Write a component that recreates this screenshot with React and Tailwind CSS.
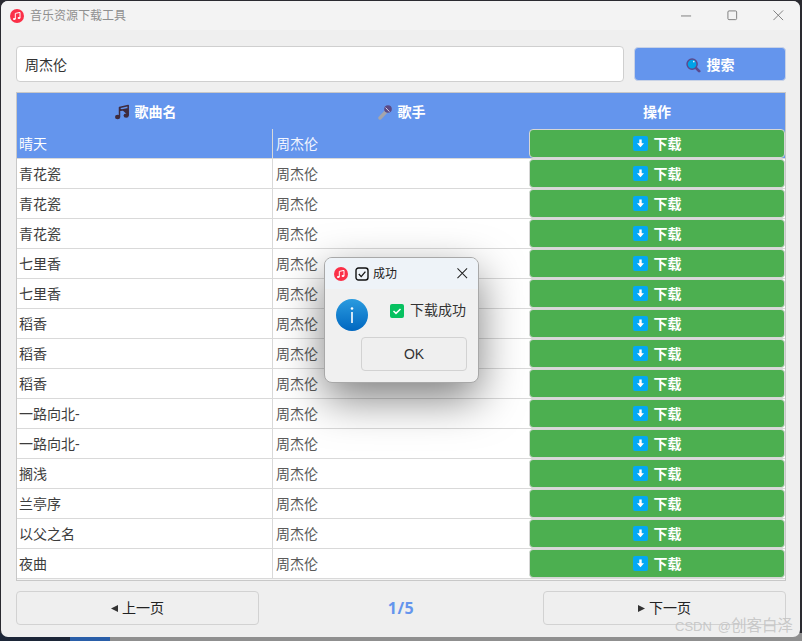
import React from 'react';

const songs = ['晴天', '青花瓷', '青花瓷', '青花瓷', '七里香', '七里香', '稻香', '稻香', '稻香', '一路向北-', '一路向北-', '搁浅', '兰亭序', '以父之名', '夜曲'];

function AppIcon({ className }) {
  return (
    <svg viewBox="0 0 14 14" className={className}>
      <circle cx="7" cy="7" r="7" fill="#fb3048" />
      <path d="M5.3 4.4 L10 3.4 V8.9 M5.3 4.4 V10" fill="none" stroke="#fff" strokeWidth="1" />
      <ellipse cx="4.3" cy="10" rx="1.4" ry="1.1" fill="#fff" />
      <ellipse cx="9" cy="9" rx="1.4" ry="1.1" fill="#fff" />
    </svg>
  );
}

function NoteIcon() {
  return (
    <svg viewBox="0 0 16 16" className="w-[16px] h-[16px]">
      <path d="M5.5 3.4 L14.2 1.4 V11.6 M5.5 3.4 V13.2 M5.5 3.4 V6.6 L14.2 4.8 V1.4 Z" fill="#3f2b3d" stroke="#3f2b3d" strokeWidth="1.5" strokeLinejoin="round" />
      <ellipse cx="3.6" cy="13" rx="2.6" ry="2.2" fill="#3f2b3d" />
      <ellipse cx="12.2" cy="11.6" rx="2.6" ry="2.2" fill="#3f2b3d" />
    </svg>
  );
}

function MicIcon() {
  return (
    <svg viewBox="0 0 16 16" className="w-[16px] h-[16px]">
      <path d="M9.6 7 L3 14" stroke="#a5a5ab" strokeWidth="3.4" strokeLinecap="round" />
      <circle cx="11" cy="5" r="3.8" fill="#5b4a86" />
      <path d="M8.6 3.6 L12.4 7.6" stroke="#d8d4e4" strokeWidth="1" />
    </svg>
  );
}

function SearchIcon() {
  return (
    <svg viewBox="0 0 16 16" className="w-[15px] h-[15px]">
      <path d="M10 10 L14 14" stroke="#5b4a8e" strokeWidth="3" strokeLinecap="round" />
      <circle cx="6.5" cy="6.5" r="5.4" fill="#00a2e8" stroke="#5b4a8e" strokeWidth="1.6" />
      <rect x="7.5" y="3" width="1.6" height="1.6" fill="#dff4ff" />
    </svg>
  );
}

function DownIcon() {
  return (
    <svg viewBox="0 0 15 15" className="w-[15px] h-[15px]">
      <rect width="15" height="15" rx="2" fill="#03a9f4" />
      <path d="M6.3 3.5 H8.7 V7.2 H11 L7.5 11.2 L4 7.2 H6.3 Z" fill="#fff" />
    </svg>
  );
}

function Row({ name, selected }) {
  return (
    <div className={`grid grid-cols-[256px_256px_1fr] h-[30px] border-b border-[#d9d9d9] ${selected ? 'bg-[#6495ed] text-white' : 'bg-white text-[#3c3c3c]'}`}>
      <div className="flex items-center pl-[2px] pt-[1px] border-r border-[#d9d9d9]">{name}</div>
      <div className={`flex items-center pl-[3px] pt-[1px] ${selected ? 'text-[#f3f6ff]' : 'text-[#5a5a5a]'}`}>周杰伦</div>
      <button className="w-full h-[29px] bg-[#4caf50] border border-[#d6d6d6] rounded-[4px] flex items-center justify-center gap-[6px] text-white font-bold text-[14px]">
        <DownIcon />
        <span className="pt-[1px]">下载</span>
      </button>
    </div>
  );
}

function PageButton({ dir, children }) {
  return (
    <button className="w-[243px] h-[34px] border border-[#d2d2d2] rounded-[4px] bg-[#efefef] flex items-center justify-center gap-[4px] text-[14px] text-[#222222]">
      <svg viewBox="0 0 7 7" className="w-[7px] h-[7px]">
        <path d={dir === 'left' ? 'M0 3.5 L7 0 V7 Z' : 'M7 3.5 L0 0 V7 Z'} fill="#333333" />
      </svg>
      {children}
    </button>
  );
}

export default function App() {
  return (
    <div className="relative w-[802px] h-[641px] overflow-hidden bg-[#2a2a30] font-['Liberation_Sans','Noto_Sans_CJK_SC',sans-serif] text-[14px]">
      <div className="absolute left-0 right-0 bottom-0 h-[8px] flex">
        <div className="w-[70px] bg-[#1c2638]" />
        <div className="w-[40px] bg-[#2a5ea8]" />
        <div className="flex-1 bg-[#8f8f8f]" />
      </div>

      <div className="relative flex flex-col w-[799px] h-[636px] ml-[1px] mt-[1px] rounded-[7px] overflow-hidden bg-[#efefef]">
        <div className="flex items-center h-[29px] bg-[#f3f3f3] shrink-0">
          <AppIcon className="w-[14px] h-[14px] ml-[9px]" />
          <span className="ml-[6px] text-[12px] text-[#8f8f8f]">音乐资源下载工具</span>
          <div className="ml-auto flex items-center text-[#777777]">
            <svg viewBox="0 0 12 12" className="w-[11px] h-[11px] mr-[35px]"><path d="M0 6.5 H11" stroke="#777" strokeWidth="1" /></svg>
            <svg viewBox="0 0 12 12" className="w-[11px] h-[11px] mr-[35px]"><rect x="1" y="1" width="9.5" height="9.5" rx="1.2" fill="none" stroke="#777" strokeWidth="1" /></svg>
            <svg viewBox="0 0 12 12" className="w-[11px] h-[11px] mr-[16px]"><path d="M.5 .5 L11 11 M11 .5 L.5 11" stroke="#777" strokeWidth="1" /></svg>
          </div>
        </div>

        <div className="flex flex-col w-[785px] pl-[15px] pt-[16px]">
          <div className="flex items-center gap-[10px] h-[36px]">
            <div className="w-[608px] h-[36px] border border-[#cfcfcf] rounded-[4px] bg-white flex items-center pl-[8px] pt-[2px] text-[14px] text-[#333333]">周杰伦</div>
            <button className="w-[152px] h-[34px] border border-[#c8d2e6] rounded-[4px] bg-[#6495ed] flex items-center justify-center gap-[6px] pt-[2px] text-white font-bold text-[14px]">
              <SearchIcon />
              搜索
            </button>
          </div>

          <div className="mt-[10px] w-[770px] h-[489px] border border-[#c8c8c8] bg-[#f4f4f4]">
            <div className="grid grid-cols-[256px_256px_1fr] h-[36px] bg-[#6495ed] text-white font-bold text-[14px]">
              <div className="flex items-center justify-center gap-[5px] pt-[2px]"><NoteIcon />歌曲名</div>
              <div className="flex items-center justify-center gap-[5px] pt-[2px]"><MicIcon />歌手</div>
              <div className="flex items-center justify-center pt-[2px]">操作</div>
            </div>
            {songs.map((name, i) => (
              <Row key={i} name={name} selected={i === 0} />
            ))}
          </div>

          <div className="mt-[10px] flex items-center justify-between">
            <PageButton dir="left">上一页</PageButton>
            <span className="text-[#6495ed] font-bold text-[16px] tracking-[0.5px] font-['Noto_Sans',sans-serif]">1/5</span>
            <PageButton dir="right">下一页</PageButton>
          </div>
        </div>
      </div>

      <div className="absolute left-[324px] top-[257px] w-[155px] h-[126px] rounded-[8px] overflow-hidden border border-[#a8a8a8] bg-[#f0f0f0] shadow-[0_16px_44px_rgba(0,0,0,0.5)]">
        <div className="flex items-center h-[31px] bg-[#eef3f8] pl-[9px] pr-[9px]">
          <AppIcon className="w-[14px] h-[14px]" />
          <svg viewBox="0 0 14 14" className="w-[14px] h-[14px] ml-[7px]">
            <rect x="1" y="1" width="12" height="12" rx="2.5" fill="none" stroke="#111" strokeWidth="1.4" />
            <path d="M3.8 7 L6.2 9.6 L10.4 4.6" fill="none" stroke="#111" strokeWidth="1.3" />
          </svg>
          <span className="ml-[4px] text-[12px] text-[#222222]">成功</span>
          <svg viewBox="0 0 12 12" className="w-[11px] h-[11px] ml-auto mr-[1px]"><path d="M.5 .5 L11 11 M11 .5 L.5 11" stroke="#222" strokeWidth="1.1" /></svg>
        </div>
        <div className="flex items-start h-[48px] pl-[11px] pt-[10px]">
          <svg viewBox="0 0 32 32" className="w-[32px] h-[32px]">
            <defs>
              <linearGradient id="infoGrad" x1="0" y1="0" x2="0" y2="1">
                <stop offset="0" stopColor="#2a9bdf" />
                <stop offset="1" stopColor="#0067c0" />
              </linearGradient>
            </defs>
            <circle cx="16" cy="16" r="16" fill="url(#infoGrad)" />
            <rect x="15.2" y="13" width="1.6" height="11" fill="#fff" />
            <circle cx="16" cy="9.5" r="1.3" fill="#fff" />
          </svg>
          <div className="flex items-center ml-[22px] mt-[1px]">
            <svg viewBox="0 0 14 14" className="w-[14px] h-[14px]">
              <rect width="14" height="14" rx="2" fill="#07c160" />
              <path d="M3.5 7 L6 9.4 L10.5 5" fill="none" stroke="#fff" strokeWidth="1.5" />
            </svg>
            <span className="ml-[6px] text-[14px] text-[#333333]">下载成功</span>
          </div>
        </div>
        <div className="flex justify-end pr-[11px]">
          <button className="w-[106px] h-[34px] border border-[#d2d2d2] rounded-[4px] bg-[#efefef] text-[14px] text-[#333333]">OK</button>
        </div>
      </div>

      <span className="absolute left-[675px] top-[614px] whitespace-nowrap text-[15.5px] text-[#c4c4c4]/90">
        <span className="text-[13px]">CSDN</span>
        <span className="text-[13px] ml-[6px]">@</span>创客白泽
      </span>
    </div>
  );
}
